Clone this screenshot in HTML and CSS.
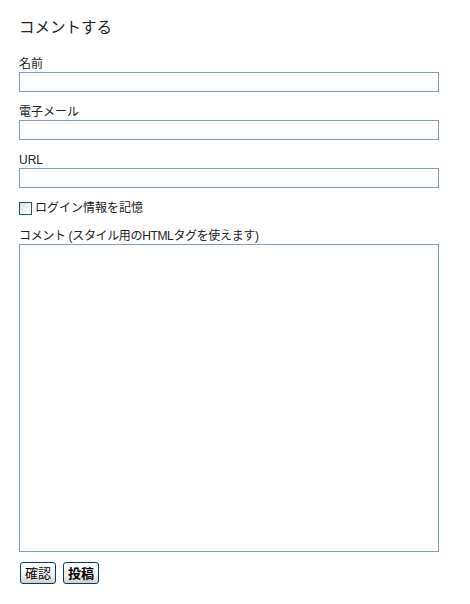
FILE: index.html
```html
<!DOCTYPE html>
<html lang="ja">
<head>
<meta charset="utf-8">
<link rel="stylesheet" href="styles.css">
</head>
<body>
<div class="comment-form">
  <h2 class="title">コメントする</h2>
  <div class="field">
    <label class="label" for="name">名前</label>
    <input class="text" id="name" type="text">
  </div>
  <div class="field">
    <label class="label" for="email">電子メール</label>
    <input class="text" id="email" type="text">
  </div>
  <div class="field">
    <label class="label" for="url">URL</label>
    <input class="text" id="url" type="text">
  </div>
  <div class="remember">
    <span class="check"></span>
    <span class="remember-text">ログイン情報を記憶</span>
  </div>
  <div class="field last">
    <label class="label narrow" for="text">コメント (スタイル用のHTMLタグを使えます)</label>
    <textarea class="area" id="text"></textarea>
  </div>
  <div class="buttons">
    <button class="btn">確認</button>
    <button class="btn bold">投稿</button>
  </div>
</div>
</body>
</html>
```
FILE: styles.css
```css
html, body {
  margin: 0;
  padding: 0;
  background: #ffffff;
}
.comment-form {
  padding: 0 0 0 19px;
  width: 420px;
  font-family: "Liberation Sans", "Noto Sans CJK JP", sans-serif;
  color: #222222;
}
.title {
  margin: 0;
  padding-top: 17px;
  font-size: 15.5px;
  line-height: 22px;
  font-weight: normal;
  color: #222222;
  height: 39px;
}
.field {
  display: flex;
  flex-direction: column;
  margin-bottom: 12px;
}
.field.last {
  margin-bottom: 10px;
}
.label {
  display: block;
  font-size: 12px;
  line-height: 16px;
  color: #222222;
}
.label.narrow {
  letter-spacing: -0.35px;
}
.text {
  box-sizing: border-box;
  width: 420px;
  height: 20px;
  margin: 0;
  padding: 0 2px;
  border: 1px solid #7f9db9;
  background: #fff;
  outline: none;
}
.remember {
  display: flex;
  align-items: center;
  gap: 3px;
  height: 16px;
  margin-bottom: 12px;
}
.check {
  box-sizing: border-box;
  width: 13px;
  height: 13px;
  border: 1px solid #1c5180;
  background: linear-gradient(135deg, #dcdcd7 0%, #f5f5f3 60%, #ffffff 100%);
}
.remember-text {
  font-size: 12px;
  line-height: 16px;
}
.area {
  box-sizing: border-box;
  width: 420px;
  height: 308px;
  margin: 0;
  border: 1px solid #7f9db9;
  resize: none;
  outline: none;
}
.buttons {
  display: flex;
  gap: 7px;
  padding-left: 1px;
}
.btn {
  box-sizing: border-box;
  height: 22px;
  padding: 0 4px;
  border: 1px solid #003c74;
  border-radius: 3px;
  background: linear-gradient(#ffffff 0%, #f4f4f0 60%, #d6d0c5 100%);
  font-family: "Noto Sans CJK JP", sans-serif;
  font-size: 13px;
  line-height: 18px;
  color: #000;
}
.btn.bold {
  font-weight: bold;
}
```
